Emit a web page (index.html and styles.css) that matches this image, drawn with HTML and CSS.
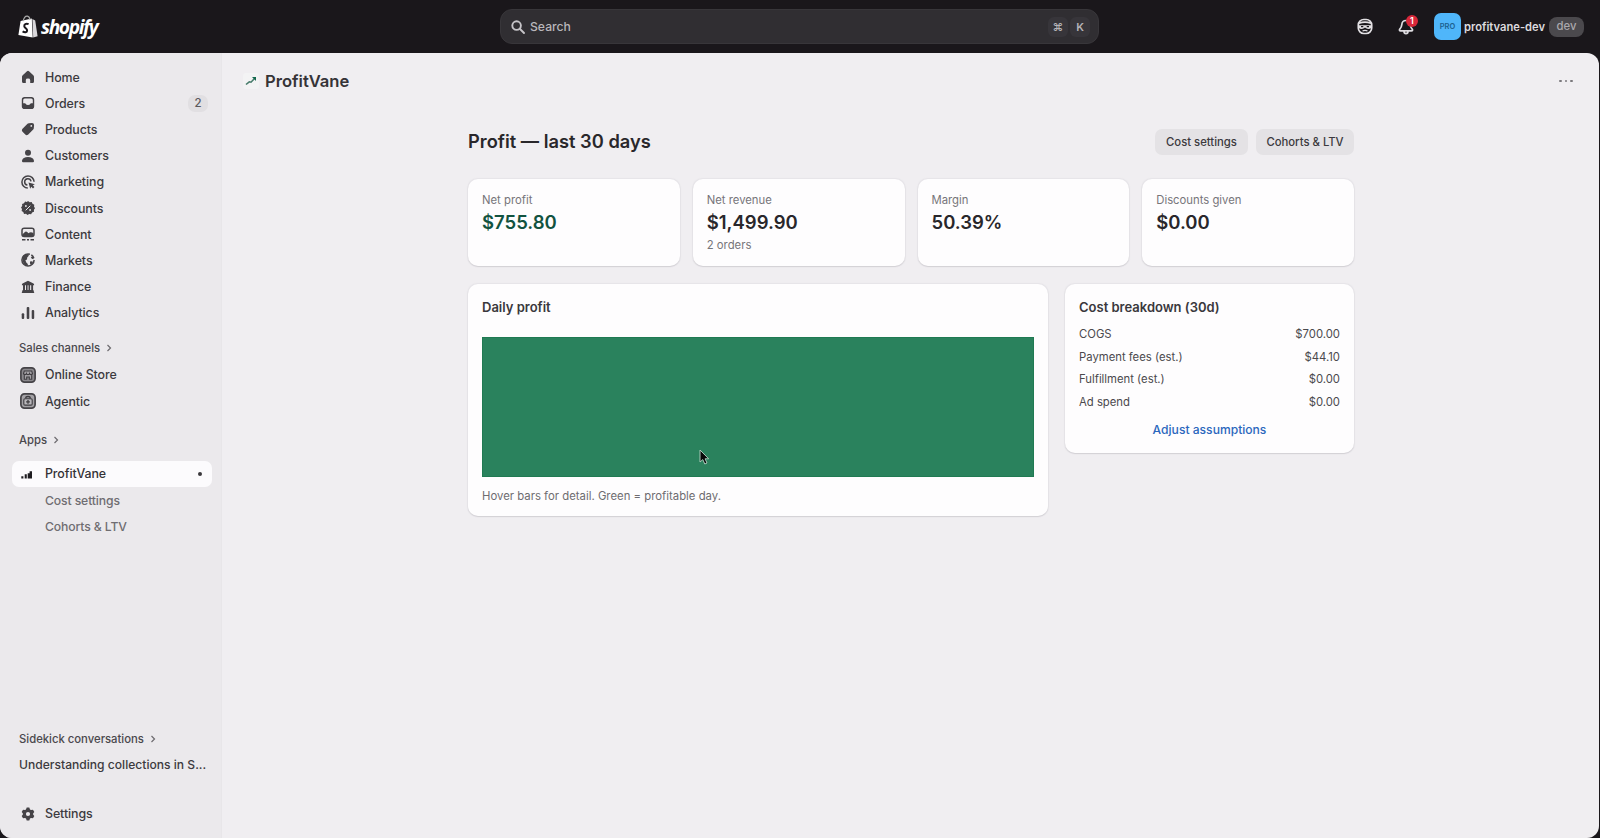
FILE: index.html
```html
<!DOCTYPE html>
<html lang="en">
<head>
<meta charset="utf-8">
<title>ProfitVane</title>
<link rel="stylesheet" href="styles.css">
</head>
<body>
<header class="topbar">
  <div class="brand">
    <svg class="brand-bag" viewBox="0 0 20 23"><path d="M2.6 6 13.8 3.6 14.7 22.5 0.4 20Z" fill="#fff"/><path d="M14.4 4 17.2 5.6 19.6 21.3 15.2 22.5Z" fill="#d9d7da"/><path d="M5.2 6.2C5.8 2.9 7.6.9 9.4 1.1 11.2 1.3 11.8 3 12 5" fill="none" stroke="#aaa" stroke-width="1.2"/><path d="M10.6 9.2C8 8 6 9.5 6.3 11.3 6.6 13.2 9.3 13.6 9.1 15.6 9 17.5 6.5 17.6 4.6 16.3" fill="none" stroke="#1a171b" stroke-width="2"/></svg>
    <span class="brand-name">shopify</span>
  </div>
  <div class="search">
    <svg class="search-icon" viewBox="0 0 14 14"><circle cx="5.6" cy="5.6" r="4.3"/><path d="m9 9 4 4"/></svg>
    <span class="search-label">Search</span>
    <kbd>⌘</kbd><kbd>K</kbd>
  </div>
  <div class="account">
    <svg class="mask-icon" viewBox="0 0 16 17"><rect x="1.3" y="1.5" width="13.4" height="14" rx="5.5" fill="none" stroke="#e3e1e4" stroke-width="1.7"/><path d="M2 5.2Q8 3 14 5.2" fill="none" stroke="#e3e1e4" stroke-width="1.6"/><path d="M1.5 7.2H14.5V9.8Q11 12.3 8 9.6 5 12.3 1.5 9.8Z" fill="#e3e1e4"/><path d="M4 8.7H6.3M9.7 8.7H12" stroke="#1a171b" stroke-width="1.2"/><path d="M5.5 13Q8 11.8 10.5 13" fill="none" stroke="#e3e1e4" stroke-width="1.2"/></svg>
    <div class="bell">
      <svg viewBox="0 0 16 16"><path d="M8 1.5C5.4 1.5 4 3.4 3.8 5.6 3.6 8 3.2 8.6 1.8 10.1 1.1 11 1.5 11.9 2.5 11.9H13.5C14.5 11.9 14.9 11 14.2 10.1 12.8 8.6 12.4 8 12.2 5.6 12 3.4 10.6 1.5 8 1.5ZM6 12.2C6 15.3 10 15.3 10 12.2" fill="none" stroke="#dedce0" stroke-width="1.7" stroke-linejoin="round"/></svg>
      <span class="bell-count">1</span>
    </div>
    <div class="avatar">PRO</div>
    <span class="store">profitvane-dev</span>
    <span class="env">dev</span>
  </div>
</header>
<div class="shell">
  <aside class="sidebar">
    <nav class="nav">
      <a class="item"><svg viewBox="0 0 14 14"><path d="M7 .8Q7.5.8 8 1.3L12.3 5.2Q13 5.9 13 6.8V11.5Q13 13 11.5 13H9.2V10Q9.2 8.6 7 8.6 4.8 8.6 4.8 10V13H2.5Q1 13 1 11.5V6.8Q1 5.9 1.7 5.2L6 1.3Q6.5.8 7 .8Z"/></svg>Home</a>
      <a class="item"><svg viewBox="0 0 14 14"><path fill-rule="evenodd" d="M3.6 1H10.4Q13.2 1 13.2 3.8V10.2Q13.2 13 10.4 13H3.6Q.8 13 .8 10.2V3.8Q.8 1 3.6 1ZM3.8 2.4Q2.2 2.4 2.2 4V7.3H3.7Q4.6 7.3 5 8.2 5.3 9 7 9 8.7 9 9 8.2 9.4 7.3 10.3 7.3H11.8V4Q11.8 2.4 10.2 2.4Z"/></svg>Orders<span class="count">2</span></a>
      <a class="item"><svg viewBox="0 0 14 14"><path fill-rule="evenodd" d="M7.8 1.2 11 .9Q13 .9 13.1 3L12.8 6.3Q12.7 7 12.2 7.5L7 12.7Q5.6 13.6 4.3 12.6L1.3 9.6Q.4 8.3 1.3 7L6.5 1.8Q7 1.3 7.8 1.2ZM10.3 3A.9.9 0 1 0 10.3 4.8 .9.9 0 1 0 10.3 3Z"/></svg>Products</a>
      <a class="item"><svg viewBox="0 0 14 14"><circle cx="7" cy="3.8" r="3"/><path d="M1 11.7Q1.8 8 7 8 12.2 8 13 11.7 13.2 13.2 11.8 13.2H2.2Q.8 13.2 1 11.7Z"/></svg>Customers</a>
      <a class="item"><svg viewBox="0 0 14 14"><path class="line" d="M6.8 13.1A6.1 6.1 0 1 1 13.1 6.8M6.4 10A3.2 3.2 0 1 1 10 6.4"/><path d="M7.5 7.5 13.9 9.2 11.8 10.3 13.4 12.1 12 13.4 10.3 11.8 9.2 13.7Z"/></svg>Marketing</a>
      <a class="item"><svg viewBox="0 0 14 14"><path d="M7 .1 8.7 1.2 10.7.9 11.5 2.7 13.3 3.7 13 5.6 14 7.2 12.9 8.8 13 10.7 11.1 11.5 10.1 13.3 8.2 13 6.5 14 5 12.8 3 12.9 2.3 11 .6 10 1 8 0 6.4 1.2 4.9 1.1 2.9 3 2.3 4.1.6 5.9 1Z"/><path class="cut" d="M4.7 9.3 9.3 4.7"/><circle cx="4.9" cy="5" r=".9" fill="#ebe9ec"/><circle cx="9.1" cy="9" r=".9" fill="#ebe9ec"/></svg>Discounts</a>
      <a class="item"><svg viewBox="0 0 14 14"><rect class="line" x="1" y="1.2" width="12" height="8.3" rx="2.2"/><path d="M1.5 7.3 4.2 4.8Q5.2 4 6.2 5L7.5 6.2Q9.3 4.5 12.5 5.9V9.3H1.5Z"/><path class="line" d="M1 12.8H4.5M6 12.8H8M9.5 12.8H13"/></svg>Content</a>
      <a class="item"><svg viewBox="0 0 14 14"><circle class="line" cx="7" cy="7" r="6.1" stroke-dasharray="30 1.5 4 3"/><path d="M1.2 5Q2.5 1 7.4 1.1L7.8 2.7 6.2 4.4 6 6.5 4.4 7.3 5.3 9.4 6.8 10.9V13Q1.4 12.2 1.2 5ZM9.8 4 11.8 3.4 12.6 6.2 10.8 5.8ZM9 8.4 11.3 8.2 12 9.5 9.9 12 9 10.4Z"/></svg>Markets</a>
      <a class="item"><svg viewBox="0 0 14 14"><path d="M7 .8 12.5 3.4Q13.3 4 13.1 5.2H.9Q.7 4 1.5 3.4ZM2 5H4V10.5H2ZM5 5H6.6V10.5H5ZM7.5 5H9.1V10.5H7.5ZM10.2 5H12.1V10.5H10.2ZM1.6 10H12.4L13.3 12.9H.7Z"/></svg>Finance</a>
      <a class="item"><svg viewBox="0 0 14 14"><rect x=".7" y="7.2" width="2.5" height="5.8" rx="1"/><rect x="5.7" y="1" width="2.6" height="12" rx="1"/><rect x="10.7" y="4" width="2.5" height="9" rx="1"/></svg>Analytics</a>
    </nav>
    <div class="section section-sales">Sales channels <svg viewBox="0 0 6 8"><path d="m1.5 1 3 3-3 3"/></svg></div>
    <nav class="nav">
      <a class="item"><svg class="big" viewBox="0 0 16 16"><rect x=".9" y=".9" width="14.2" height="14.2" rx="3.6" fill="#8a888c" stroke="#454347" stroke-width="1.7"/><path d="M4.3 4H11.7L12.5 6.5Q12.2 7.6 11 7.6 9.7 7.6 9.5 6.7 9.2 7.6 8 7.6 6.8 7.6 6.5 6.7 6.3 7.6 5 7.6 3.8 7.6 3.5 6.5ZM4.3 8V12.3H6.7V10H9.3V12.3H11.7V8" fill="#d6d4d8" fill-opacity=".35" stroke="#3f3d41" stroke-width="1.1"/></svg>Online Store</a>
      <a class="item"><svg class="big" viewBox="0 0 16 16"><rect x=".9" y=".9" width="14.2" height="14.2" rx="3.6" fill="#a3a1a5" stroke="#454347" stroke-width="1.7"/><rect x="3.8" y="5.7" width="8.4" height="6.4" rx="1.2" fill="#b9b7bb" stroke="#3f3d41" stroke-width="1.1"/><path d="M5.7 5.3Q5.8 3.5 8 3.5 10.2 3.5 10.3 5.3M8 7V10.8M6.1 8.9H9.9" fill="none" stroke="#3f3d41" stroke-width="1.3"/></svg>Agentic</a>
    </nav>
    <div class="section section-apps">Apps <svg viewBox="0 0 6 8"><path d="m1.5 1 3 3-3 3"/></svg></div>
    <nav class="nav">
      <a class="item active"><svg viewBox="0 0 14 14"><path d="M.3 9.3H2.4V11.5H.3ZM3.7 7.3H5.8V11.5H3.7ZM6.7 6.3H8.6V4.3H11V11.5H9.3V11.5H6.7Z"/></svg>ProfitVane<span class="dot"></span></a>
      <a class="item sub">Cost settings</a>
      <a class="item sub">Cohorts &amp; LTV</a>
    </nav>
    <div class="sidebar-end">
      <div class="section">Sidekick conversations <svg viewBox="0 0 6 8"><path d="m1.5 1 3 3-3 3"/></svg></div>
      <div class="chat">Understanding collections in S...</div>
      <a class="item settings"><svg viewBox="0 0 14 14"><path fill-rule="evenodd" d="M5.7.6H8.3L9 2.4 10 3 12 2.7 13.3 4.9 12.1 6.4V7.6L13.3 9.1 12 11.3 10 11 9 11.6 8.3 13.4H5.7L5 11.6 4 11 2 11.3.7 9.1 1.9 7.6V6.4L.7 4.9 2 2.7 4 3 5 2.4ZM7 4.9A2.1 2.1 0 1 0 7 9.1 2.1 2.1 0 1 0 7 4.9Z"/></svg>Settings</a>
    </div>
  </aside>
  <main class="main">
    <div class="app-head">
      <svg class="app-logo" viewBox="0 0 16 16"><rect width="16" height="16" rx="3" fill="#f3f3f4"/><path d="M3 11.5 6.3 8.8 8 9.2 11.5 5.5" fill="none" stroke="#477b6b" stroke-width="1.6"/><path d="M9 4H13V8Z" fill="#12694e"/></svg>
      <span class="app-name">ProfitVane</span>
      <span class="more"><i></i><i></i><i></i></span>
    </div>
    <div class="page">
      <div class="page-head">
        <h1>Profit — last 30 days</h1>
        <button class="btn btn-cost">Cost settings</button>
        <button class="btn btn-ltv">Cohorts &amp; LTV</button>
      </div>
      <section class="metrics">
        <div class="card metric"><span class="label">Net profit</span><strong class="value good">$755.80</strong></div>
        <div class="card metric"><span class="label">Net revenue</span><strong class="value">$1,499.90</strong><span class="label note">2 orders</span></div>
        <div class="card metric"><span class="label">Margin</span><strong class="value">50.39%</strong></div>
        <div class="card metric"><span class="label">Discounts given</span><strong class="value">$0.00</strong></div>
      </section>
      <section class="details">
        <div class="card daily">
          <h2>Daily profit</h2>
          <div class="chart"><svg class="cursor" viewBox="0 0 12 18"><path d="M2 2V14L4.8 11.6 6.8 16 9 15 7.1 10.8H10.7Z" fill="#080808" stroke="#a9c8b9" stroke-width="1"/></svg></div>
          <p class="hint">Hover bars for detail. Green = profitable day.</p>
        </div>
        <div class="card costs">
          <h2 class="costs-title">Cost breakdown (30d)</h2>
          <div class="row"><span>COGS</span><span>$700.00</span></div>
          <div class="row"><span>Payment fees (est.)</span><span>$44.10</span></div>
          <div class="row"><span>Fulfillment (est.)</span><span>$0.00</span></div>
          <div class="row"><span>Ad spend</span><span>$0.00</span></div>
          <a class="adjust">Adjust assumptions</a>
        </div>
      </section>
    </div>
  </main>
</div>
</body>
</html>
```
FILE: styles.css
```css
* { box-sizing: border-box; }
body { margin: 0; width: 1600px; height: 838px; overflow: hidden; background: #1a171b; font-family: Inter, "Liberation Sans", sans-serif; font-size: 13px; color: #343235; }
h1, h2, p { margin: 0; }
svg { display: block; flex: none; }

.topbar { height: 53px; display: grid; grid-template-columns: 500px 599px 1fr; align-items: center; }
.brand { display: flex; align-items: center; padding-left: 18px; gap: 3px; }
.brand-bag { width: 20px; height: 23px; }
.brand-name { font: italic 700 19.2px/22px "Open Sans", sans-serif; letter-spacing: -1.4px; color: #fff; }
.search { height: 35px; border: 1px solid #38363a; border-radius: 12px; background: #302e32; display: flex; align-items: center; padding: 0 8px 0 10px; }
.search-icon { width: 14px; height: 14px; fill: none; stroke: #c6c4c8; stroke-width: 1.9; stroke-linecap: round; }
.search-label { flex: 1; margin-left: 5px; font-weight: 500; font-size: 12.2px; color: #b9b7bb; }
kbd { width: 20px; height: 20px; margin-left: 2px; border-radius: 6px; background: #37353a; color: #b5b3b7; font: 600 11px/20px Inter, "DejaVu Sans", sans-serif; text-align: center; }
.account { display: flex; align-items: center; padding-left: 258px; }
.mask-icon { width: 16px; height: 17px; }
.bell { position: relative; margin-left: 25px; }
.bell svg { width: 16px; height: 16px; }
.bell-count { position: absolute; left: 8px; top: -4px; width: 12px; height: 12px; border-radius: 6px; background: #d9283a; color: #fff; font-size: 9px; line-height: 12px; text-align: center; font-weight: 600; }
.avatar { width: 27px; height: 27px; margin-left: 20px; border-radius: 7px; background: #4fb6fa; color: #1c608f; font-size: 7.5px; line-height: 27px; text-align: center; font-weight: 600; }
.store { width: 80px; margin-left: 3px; font-size: 11.2px; font-weight: 600; color: #dddbdf; white-space: nowrap; }
.env { margin-left: 5px; width: 35px; height: 20px; border-radius: 8px; background: #4b494d; color: #aaa8ac; font-size: 11.3px; line-height: 19px; text-align: center; font-weight: 500; }

.shell { width: 1599px; height: 785px; display: flex; border-radius: 12px; overflow: hidden; background: #f0eef1; }
.sidebar { width: 222px; flex: none; background: #ebe9ec; border-right: 1px solid #e8e6e9; padding: 11px 9px 11px 12px; display: flex; flex-direction: column; }
.item { height: 26.2px; display: flex; align-items: center; padding-left: 9px; gap: 10px; font-weight: 500; font-size: 12.4px; letter-spacing: -0.08px; color: #3c3a3e; white-space: nowrap; }
.item svg { width: 14px; height: 14px; fill: #454347; }
.item svg.big { width: 16px; height: 16px; margin: 0 -1px; }
.item svg .line { fill: none; stroke: #454347; stroke-width: 1.5; }
.item svg .cut { fill: none; stroke: #ebe9ec; stroke-width: 1; }
.count { margin-left: auto; margin-right: 4px; width: 20px; height: 17px; border-radius: 7px; background: #e1dfe2; font-size: 11.5px; line-height: 17px; text-align: center; color: #5b595d; }
.section { height: 20px; display: flex; align-items: center; gap: 6px; padding-left: 7px; font-size: 11.3px; font-weight: 500; color: #4a484c; }
.section svg { width: 6px; height: 8px; fill: none; stroke: #6d6b6f; stroke-width: 1.2; }
.section-sales { margin: 12.5px 0 3.5px; }
.section-apps { margin: 15.5px 0 11px; }
.item.active { background: #fcfbfd; border-radius: 7px; color: #343236; }
.item.active svg { fill: #1e1c20; }
.dot { width: 4px; height: 4px; border-radius: 2px; margin-left: auto; margin-right: 10px; background: #3a383c; }
.item.sub { padding-left: 33px; font-size: 12.2px; letter-spacing: -0.12px; color: #6f6d71; font-weight: 450; }
.sidebar-end { margin-top: auto; }
.chat { height: 26px; margin-top: 3px; padding-left: 7px; line-height: 26px; font-size: 12.1px; font-weight: 500; color: #3c3a3e; white-space: nowrap; }
.settings { margin-top: 23px; }

.main { flex: 1; }
.app-head { height: 56px; display: flex; align-items: center; padding: 0 26px 0 21px; }
.app-logo { width: 16px; height: 16px; }
.app-name { margin-left: 6px; font-size: 16.6px; font-weight: 600; color: #353337; }
.more { margin-left: auto; display: flex; gap: 3px; }
.more i { width: 2.6px; height: 2.6px; border-radius: 2px; background: #7b797d; }
.page { width: 886px; margin: 20px 0 0 246px; }
.page-head { height: 26px; display: flex; align-items: center; gap: 8px; }
h1 { flex: 1; font-size: 18.3px; line-height: 22px; padding-bottom: 2px; font-weight: 640; color: #29272b; }
.btn { height: 26px; padding: 0; border: 0; border-radius: 7px; background: #e4e2e5; font: 550 11.3px/26px Inter, sans-serif; color: #3c3a3e; }
.btn-cost { width: 93px; }
.btn-ltv { width: 98px; }
.card { background: #fefdfe; border-radius: 10px; box-shadow: 0 1px 1px #d3d1d5, 0 0 1px 0.5px #e6e4e8; }
.metrics { margin-top: 24px; display: grid; grid-template-columns: repeat(4, 1fr); gap: 13px; }
.metric { height: 87px; padding: 12.5px 14px; display: flex; flex-direction: column; }
.label { font-size: 11.3px; line-height: 17px; color: #77757a; }
.value { margin-top: 1px; font-size: 18.5px; line-height: 24px; font-weight: 600; color: #29272b; }
.value.good { color: #125340; }
.note { margin-top: 3px; }
.details { margin-top: 18px; display: grid; grid-template-columns: 580px 1fr; gap: 17px; align-items: start; }
.daily { height: 232px; padding: 13px 14px; }
h2 { font-size: 13px; line-height: 20px; font-weight: 600; color: #3a383c; }
.chart { position: relative; height: 140px; margin-top: 20px; background: #2a825d; border: 1px solid #207a52; }
.cursor { position: absolute; left: 215px; top: 110px; width: 12px; height: 18px; }
.hint { margin-top: 10px; font-size: 11.35px; line-height: 18px; color: #6e6c70; }
.costs { height: 169px; padding: 13px 14px; }
.costs-title { margin-bottom: 6px; }
.row { height: 22.5px; display: flex; align-items: center; justify-content: space-between; font-size: 11.3px; color: #4b494d; }
.adjust { display: block; margin-top: 7px; text-align: center; font-size: 12.1px; line-height: 20px; color: #2b67bd; font-weight: 450; }
```
